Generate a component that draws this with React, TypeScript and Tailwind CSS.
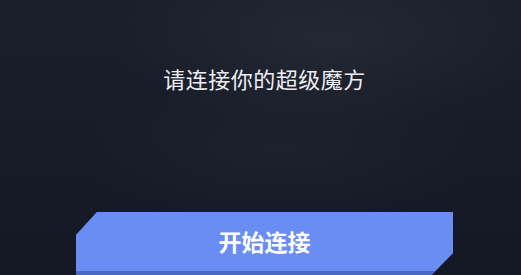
export default function App() {
  return (
    <main className="flex h-[275px] w-full flex-col items-center overflow-hidden pl-[8px] bg-[#171b26] bg-[radial-gradient(ellipse_220px_90px_at_330px_40px,rgba(58,62,78,0.3),transparent),radial-gradient(ellipse_200px_80px_at_280px_150px,rgba(40,44,58,0.35),transparent),linear-gradient(180deg,#1b1f29_0%,#161b26_60%,#141824_100%)] font-['Noto_Sans_CJK_SC','Noto_Sans',sans-serif]">
      <p className="mt-[62px] text-[22px] leading-[32px] tracking-[0.5px] text-[#eceef3]">
        请连接你的超级魔方
      </p>

      <div className="relative mt-auto h-[63px] w-[377px]">
        <div className="absolute inset-0 bg-[#4b68c6] [clip-path:polygon(21px_0,100%_0,100%_calc(100%-22px),calc(100%-21px)_100%,0_100%,0_23px)]" />
        <button className="absolute left-0 right-0 top-0 flex h-[59px] items-center justify-center bg-[#698df3] text-[23px] font-bold text-white [clip-path:polygon(21px_0,100%_0,100%_calc(100%-18px),calc(100%-18px)_100%,0_100%,0_23px)]">
          开始连接
        </button>
      </div>
    </main>
  );
}
